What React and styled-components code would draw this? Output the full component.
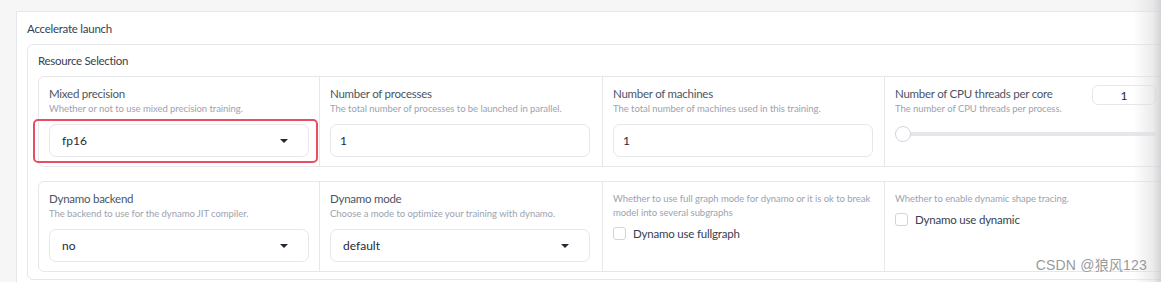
import React from "react";
import styled, { createGlobalStyle } from "styled-components";

const Global = createGlobalStyle`
  html, body { margin: 0; padding: 0; background: #f6f6f7; overflow: hidden; }
  body { font-family: "Source Sans Pro", "Lato", "Noto Sans", sans-serif; }
  * { box-sizing: border-box; }
`;

const Page = styled.div`
  position: relative;
  width: 1161px;
  height: 282px;
  overflow: hidden;
  padding: 11px 0 0 16px;
`;

const Outer = styled.section`
  width: 1180px;
  background: #fff;
  border: 1px solid #e5e7eb;
  padding: 9px 10px 10px 10px;
`;

const Title = styled.div`
  font-size: 11.5px;
  letter-spacing: -0.25px;
  line-height: 16px;
  color: #374151;
  margin-bottom: 7px;
`;

const Accordion = styled.div`
  border: 1px solid #e5e7eb;
  border-radius: 6px;
  padding: 0 10px 7px 10px;
  background: #fff;
`;

const AccHeader = styled.div`
  display: flex;
  justify-content: space-between;
  align-items: center;
  height: 31px;
  font-size: 11.5px;
  letter-spacing: -0.3px;
  color: #374151;
`;

const Caret = styled.span`
  font-size: 10px;
  color: #374151;
  margin-right: 4px;
`;

const Rows = styled.div`
  display: flex;
  flex-direction: column;
  gap: 14px;
`;

const Row = styled.div`
  display: grid;
  grid-template-columns: 280px 283px 282px 282px;
  border: 1px solid #e5e7eb;
  border-radius: 6px;
  height: ${(p) => p.$h}px;
`;

const Cell = styled.div`
  position: relative;
  padding: 9px 10px 0 10px;
  border-left: ${(p) => (p.$first ? "none" : "1px solid #e5e7eb")};
`;

const LabelLine = styled.div`
  display: flex;
  justify-content: space-between;
  align-items: flex-start;
`;

const Label = styled.div`
  font-size: 11.5px;
  letter-spacing: -0.25px;
  line-height: 15px;
  color: #4b5563;
`;

const Desc = styled.div`
  font-size: 9.5px;
  letter-spacing: -0.05px;
  line-height: 14px;
  margin-top: 1px;
  color: #9ca3af;
`;

const Field = styled.div`
  position: relative;
  margin-top: 8px;
  height: 33px;
  width: 260px;
  border: 1px solid #e5e7eb;
  border-radius: 7px;
  display: flex;
  align-items: center;
  justify-content: space-between;
  padding: 0 20px 0 12px;
  font-size: 12px;
  color: #1f2937;
  background: #fff;
  &::after {
    content: "";
    display: ${(p) => (p.$highlight ? "block" : "none")};
    position: absolute;
    left: -17px;
    right: -10px;
    top: -6px;
    bottom: -7px;
    border: 2px solid #ea4d5f;
    border-radius: 5px;
  }
`;

const InputText = styled.span`
  margin-left: ${(p) => (p.$num ? "-3px" : "0")};
`;

const Triangle = styled.span`
  width: 0;
  height: 0;
  border-left: 4px solid transparent;
  border-right: 4px solid transparent;
  border-top: 4px solid #1f2937;
`;

const NumBox = styled.div`
  width: 64px;
  height: 20px;
  margin-top: -1px;
  border: 1px solid #e5e7eb;
  border-radius: 6px;
  font-size: 12px;
  color: #1f2937;
  display: flex;
  align-items: center;
  justify-content: center;
`;

const Slider = styled.div`
  position: relative;
  margin-top: 10px;
  height: 16px;
  display: flex;
  align-items: center;
`;

const Track = styled.div`
  flex: 1;
  height: 4px;
  background: #e5e7eb;
  border-radius: 2px;
`;

const Thumb = styled.div`
  position: absolute;
  left: 0;
  top: 0;
  width: 16px;
  height: 16px;
  border-radius: 50%;
  background: #fff;
  border: 1px solid #d1d5db;
`;

const Check = styled.label`
  display: flex;
  align-items: center;
  gap: 7px;
  margin-top: ${(p) => p.$mt}px;
  font-size: 11.5px;
  letter-spacing: -0.2px;
  color: #374151;
`;

const Box = styled.span`
  width: 13px;
  height: 13px;
  border: 1px solid #d1d5db;
  border-radius: 3px;
  background: #fff;
`;

const Shade = styled.div`
  position: absolute;
  top: 0;
  right: 0;
  width: 28px;
  height: 100%;
  background: linear-gradient(to right, rgba(235,235,237,0) 0%, rgba(220,220,222,0.55) 70%, rgba(205,205,208,0.85) 100%);
  pointer-events: none;
`;

const Watermark = styled.div`
  position: absolute;
  right: 14px;
  bottom: 8px;
  font-family: "Liberation Sans", "Noto Sans CJK SC", sans-serif;
  font-size: 14px;
  color: #9a9a9a;
  letter-spacing: 0.2px;
`;

function Select({ value, highlight }) {
  return (
    <Field $highlight={highlight}>
      <InputText>{value}</InputText>
      <Triangle />
    </Field>
  );
}

function Input({ value }) {
  return (
    <Field>
      <InputText $num>{value}</InputText>
    </Field>
  );
}

export default function App() {
  return (
    <>
      <Global />
      <Page>
        <Outer>
          <Title>Accelerate launch</Title>
          <Accordion>
            <AccHeader>
              <span>Resource Selection</span>
              <Caret>▼</Caret>
            </AccHeader>
            <Rows>
              <Row $h={91}>
                <Cell $first>
                  <Label>Mixed precision</Label>
                  <Desc>Whether or not to use mixed precision training.</Desc>
                  <Select value="fp16" highlight />
                </Cell>
                <Cell>
                  <Label>Number of processes</Label>
                  <Desc>The total number of processes to be launched in parallel.</Desc>
                  <Input value="1" />
                </Cell>
                <Cell>
                  <Label>Number of machines</Label>
                  <Desc>The total number of machines used in this training.</Desc>
                  <Input value="1" />
                </Cell>
                <Cell>
                  <LabelLine>
                    <div>
                      <Label>Number of CPU threads per core</Label>
                      <Desc>The number of CPU threads per process.</Desc>
                    </div>
                    <NumBox>1</NumBox>
                  </LabelLine>
                  <Slider>
                    <Track />
                    <Thumb />
                  </Slider>
                </Cell>
              </Row>
              <Row $h={91}>
                <Cell $first>
                  <Label>Dynamo backend</Label>
                  <Desc>The backend to use for the dynamo JIT compiler.</Desc>
                  <Select value="no" />
                </Cell>
                <Cell>
                  <Label>Dynamo mode</Label>
                  <Desc>Choose a mode to optimize your training with dynamo.</Desc>
                  <Select value="default" />
                </Cell>
                <Cell>
                  <Desc>
                    Whether to use full graph mode for dynamo or it is ok to break
                    <br />
                    model into several subgraphs
                  </Desc>
                  <Check $mt={7}>
                    <Box />
                    Dynamo use fullgraph
                  </Check>
                </Cell>
                <Cell>
                  <Desc>Whether to enable dynamic shape tracing.</Desc>
                  <Check $mt={7}>
                    <Box />
                    Dynamo use dynamic
                  </Check>
                </Cell>
              </Row>
            </Rows>
          </Accordion>
        </Outer>
        <Shade />
        <Watermark>CSDN @狼风123</Watermark>
      </Page>
    </>
  );
}
